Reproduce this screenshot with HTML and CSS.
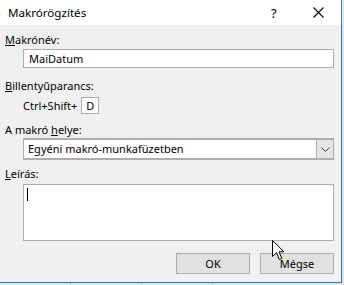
FILE: index.html
```html
<!DOCTYPE html>
<html lang="hu">
<head>
    <meta charset="UTF-8">
    <title>Makrórögzítés</title>
    <link rel="stylesheet" href="styles.css">
</head>
<body>
    <div class="dialog">
        <div class="titlebar">
            <span class="title">Makrórögzítés</span>
            <span class="help">?</span>
            <span class="close">
                <svg width="11" height="11" viewBox="0 0 11 11"><path d="M0.5 0.5 L10.5 10.5 M10.5 0.5 L0.5 10.5" stroke="#000" stroke-width="1.1"/></svg>
            </span>
        </div>
        <div class="content">
            <div class="label"><u>M</u>akrónév:</div>
            <div class="field input">MaiDatum</div>

            <div class="label gap-lg"><u>B</u>illentyűparancs:</div>
            <div class="shortcut">
                <span>Ctrl+Shift+</span>
                <span class="key">D</span>
            </div>

            <div class="label gap-md">A makró <u>h</u>elye:</div>
            <div class="field select">
                <span class="select-text">Egyéni makró-munkafüzetben</span>
                <span class="select-btn">
                    <svg width="9" height="5" viewBox="0 0 9 5"><path d="M0.5 0.5 L4.5 4.5 L8.5 0.5" fill="none" stroke="#444" stroke-width="1"/></svg>
                </span>
            </div>

            <div class="label gap-sm"><u>L</u>eírás:</div>
            <div class="field textarea"><span class="caret"></span></div>

            <div class="buttons">
                <button class="button">OK</button>
                <button class="button">Mégse</button>
            </div>
        </div>
        <svg class="cursor" width="13" height="21" viewBox="0 0 13 21">
            <path d="M0.5 0.5 L0.5 16.5 L4.5 12.7 L7.3 19.5 L9.8 18.4 L7 11.8 L12 11.8 Z" fill="#fff" stroke="#000" stroke-width="1"/>
        </svg>
    </div>
    <div class="sheet">
        <span></span><span></span><span></span>
    </div>
</body>
</html>
```

FILE: styles.css
```css
body {
    margin: 0;
    width: 344px;
    height: 285px;
    overflow: hidden;
    background: #e3e3e3;
    font-family: 'Noto Sans', sans-serif;
    font-size: 11px;
    color: #000;
}

.dialog {
    position: relative;
    width: 341px;
    height: 282px;
    background: #f0f0f0;
    border-right: 1px solid #1c7fd4;
    border-bottom: 1px solid #1c7fd4;
}

.titlebar {
    height: 25px;
    background: #fff;
    display: flex;
    align-items: center;
    padding-left: 8px;
}

.title {
    flex: 1;
    font-size: 11.6px;
}

.help {
    width: 10px;
    font-size: 13px;
    margin-right: 32px;
}

.close {
    display: flex;
    margin-right: 17px;
}

.content {
    padding: 7px 7px 0 5px;
}

.label {
    line-height: 15px;
    height: 15px;
}

.gap-lg { margin-top: 10px; }
.gap-md { margin-top: 8px; }
.gap-sm { margin-top: 6px; }

.field {
    margin-left: 18px;
    background: #fff;
    border: 1px solid #acacac;
    box-sizing: border-box;
}

.input {
    margin-top: 2px;
    height: 19px;
    line-height: 17px;
    padding-left: 5px;
}

.shortcut {
    margin-top: 4px;
    margin-left: 18px;
    display: flex;
    align-items: center;
    gap: 4px;
    height: 17px;
}

.key {
    width: 18px;
    height: 17px;
    box-sizing: border-box;
    border: 1px solid #acacac;
    background: #fff;
    text-align: center;
    line-height: 15px;
}

.select {
    margin-top: 1px;
    height: 22px;
    display: flex;
    align-items: stretch;
    border-width: 2px 1px;
    border-color: #adadad;
}

.select-text {
    flex: 1;
    line-height: 18px;
    padding-left: 4px;
}

.select-btn {
    width: 16px;
    background: #e5e5e5;
    border-left: 1px solid #adadad;
    display: flex;
    align-items: center;
    justify-content: center;
}

.textarea {
    margin-top: 3px;
    height: 57px;
    padding: 3px 0 0 3px;
}

.caret {
    display: block;
    width: 1px;
    height: 13px;
    background: #000;
}

.buttons {
    margin-top: 12px;
    display: flex;
    justify-content: flex-end;
    gap: 10px;
}

.button {
    width: 74px;
    height: 21px;
    padding: 0;
    background: #e1e1e1;
    border: 1px solid #adadad;
    font-family: 'Noto Sans', sans-serif;
    font-size: 11px;
    color: #000;
}

.cursor {
    position: absolute;
    left: 272px;
    top: 240px;
}

.sheet {
    height: 2px;
    display: flex;
}

.sheet span {
    width: 70px;
    border-right: 1px solid #c6c6c6;
}
```
